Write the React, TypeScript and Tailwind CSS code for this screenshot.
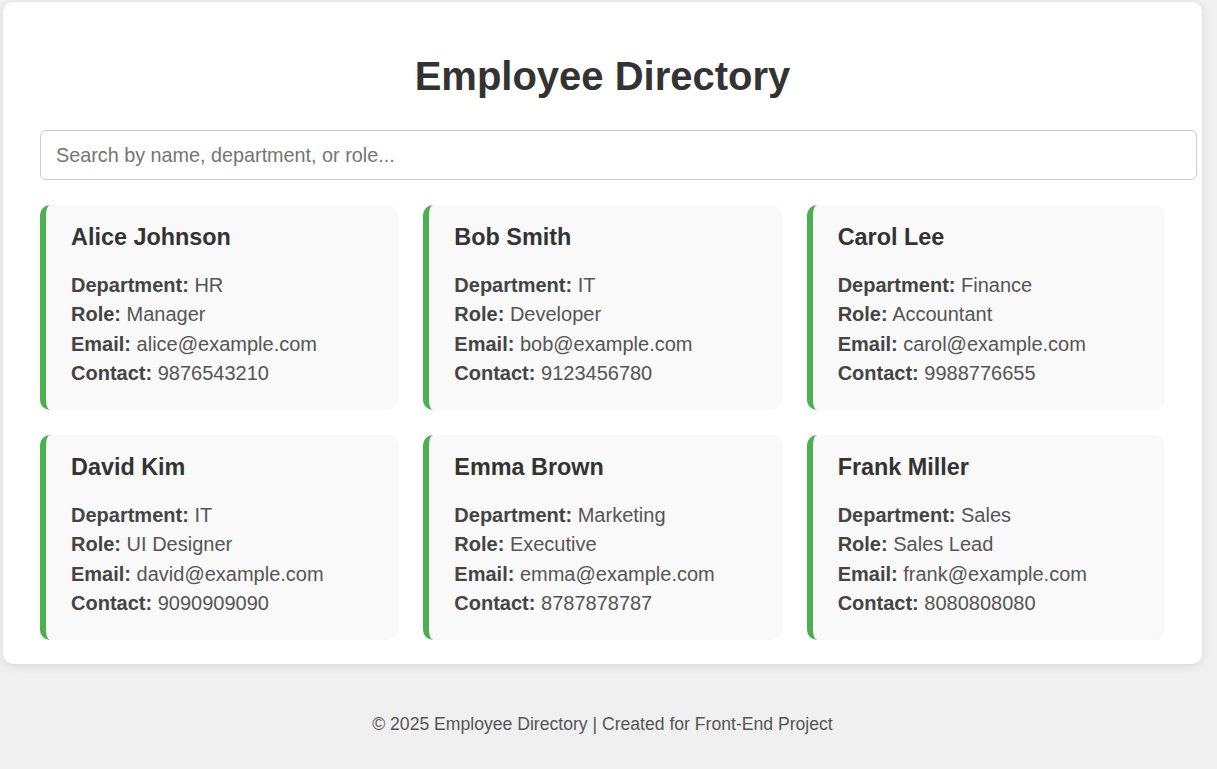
import React from "react";

const employees = [
  { name: "Alice Johnson", department: "HR", role: "Manager", email: "alice@example.com", contact: "9876543210" },
  { name: "Bob Smith", department: "IT", role: "Developer", email: "bob@example.com", contact: "9123456780" },
  { name: "Carol Lee", department: "Finance", role: "Accountant", email: "carol@example.com", contact: "9988776655" },
  { name: "David Kim", department: "IT", role: "UI Designer", email: "david@example.com", contact: "9090909090" },
  { name: "Emma Brown", department: "Marketing", role: "Executive", email: "emma@example.com", contact: "8787878787" },
  { name: "Frank Miller", department: "Sales", role: "Sales Lead", email: "frank@example.com", contact: "8080808080" },
];

const Field = ({ label, value }: { label: string; value: string }) => (
  <p className="text-[#555]">
    <strong className="font-bold text-[#444]">{label}:</strong> {value}
  </p>
);

const App = () => {
  return (
    <div className="min-h-[769px] bg-[#f0f0f0] font-['Liberation_Sans',Arial,sans-serif] overflow-hidden">
      <div className="ml-[3px] mt-[2px] w-[1199px] bg-white rounded-[10px] shadow-[0_2px_10px_rgba(0,0,0,0.1)] px-[37px] pt-[51px] pb-[24px]">
        <h1 className="text-center text-[40px] leading-[46px] font-bold text-[#333]">
          Employee Directory
        </h1>
        <input
          type="text"
          placeholder="Search by name, department, or role..."
          className="mt-[31px] block box-border w-[1157px] h-[50px] px-[15px] border border-[#ccc] rounded-[6px] text-[19.8px] text-[#333] placeholder:text-[#757575] outline-none"
        />
        <div className="mt-[25px] grid grid-cols-3 gap-[25px]">
          {employees.map((e) => (
            <div
              key={e.name}
              className="h-[205px] bg-[#f9f9f9] rounded-[10px] border-l-[6px] border-[#4caf50] pl-[25px] pr-4 pt-[19px]"
            >
              <h3 className="text-[23.4px] leading-[26px] font-bold text-[#333]">{e.name}</h3>
              <div className="mt-[21px] text-[20px] leading-[29.3px]">
                <Field label="Department" value={e.department} />
                <Field label="Role" value={e.role} />
                <Field label="Email" value={e.email} />
                <Field label="Contact" value={e.contact} />
              </div>
            </div>
          ))}
        </div>
      </div>
      <footer className="w-[1205px] pt-[50px] text-center text-[17.6px] leading-[20px] text-[#555]">
        © 2025 Employee Directory | Created for Front-End Project
      </footer>
    </div>
  );
};

export default App;
